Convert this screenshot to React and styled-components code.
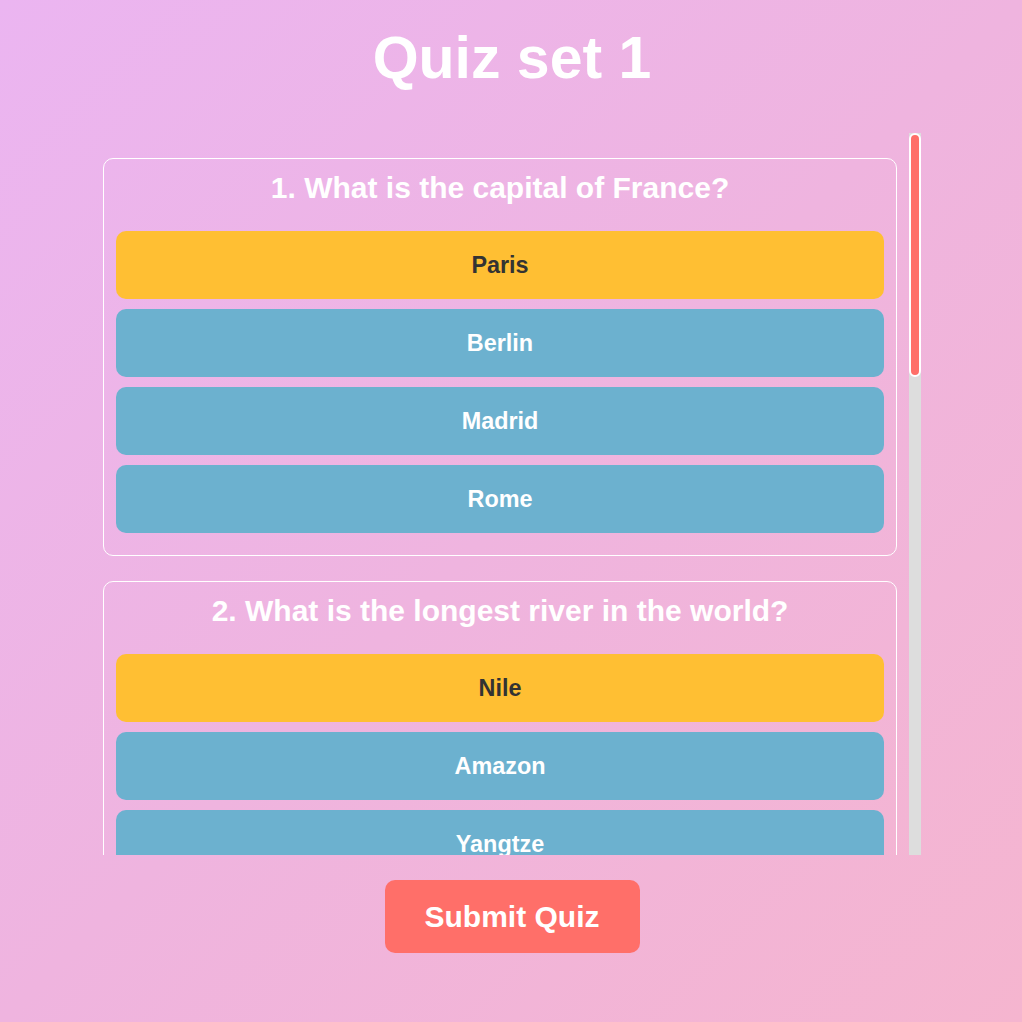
import React, { useState, useRef, useEffect, useCallback } from "react";
import styled, { createGlobalStyle } from "styled-components";

const GlobalStyle = createGlobalStyle`
  html, body {
    margin: 0;
    padding: 0;
    height: 100%;
  }
  body {
    font-family: "Liberation Sans", Arial, Helvetica, sans-serif;
    background: linear-gradient(135deg, #ebb5f1 0%, #efb4df 50%, #f5b5cf 100%);
    min-height: 1022px;
  }
`;

const Page = styled.div`
  display: flex;
  flex-direction: column;
  align-items: center;
  padding-left: 2px;
  min-height: 1022px;
  box-sizing: border-box;
`;

const Title = styled.h1`
  margin: 24px 0 41px;
  font-size: 59px;
  font-weight: 700;
  line-height: 68px;
  color: #ffffff;
  text-align: center;
`;

const ScrollFrame = styled.div`
  display: flex;
  width: 818px;
  height: 722px;
`;

const ScrollArea = styled.div`
  flex: 1;
  height: 100%;
  box-sizing: border-box;
  padding-right: 12px;
  overflow-y: scroll;
  scrollbar-width: none;
  &::-webkit-scrollbar {
    display: none;
  }
`;

const Track = styled.div`
  position: relative;
  width: 12px;
  height: 100%;
  background: #dddddd;
`;

const Thumb = styled.div`
  position: absolute;
  left: 0;
  width: 12px;
  box-sizing: border-box;
  background: #ff6f69;
  border: 2px solid #ffffff;
  border-radius: 6px;
`;

const Card = styled.section`
  margin: 25px 0;
  padding: 12px;
  border: 1px solid #ffffff;
  border-radius: 10px;
`;

const Question = styled.h2`
  margin: 0 0 26px;
  font-size: 30px;
  font-weight: 700;
  line-height: 34px;
  color: #ffffff;
  text-align: center;
`;

const Options = styled.div`
  display: flex;
  flex-direction: column;
  gap: 10px;
  padding-bottom: 10px;
`;

const Option = styled.button`
  display: block;
  width: 100%;
  border: none;
  border-radius: 10px;
  padding: 20px;
  font-family: inherit;
  font-size: 23.4px;
  font-weight: 700;
  line-height: 28px;
  cursor: pointer;
  background: ${(p) => (p.$selected ? "#ffbf33" : "#6cb1cf")};
  color: ${(p) => (p.$selected ? "#333333" : "#ffffff")};
`;

const Submit = styled.button`
  margin-top: 25px;
  border: none;
  border-radius: 10px;
  padding: 20px 40px;
  background: #ff6f69;
  color: #ffffff;
  font-family: inherit;
  font-size: 30px;
  font-weight: 700;
  line-height: 33px;
  cursor: pointer;
`;

const questions = [
  {
    q: "What is the capital of France?",
    options: ["Paris", "Berlin", "Madrid", "Rome"],
  },
  {
    q: "What is the longest river in the world?",
    options: ["Nile", "Amazon", "Yangtze", "Mississippi"],
  },
  {
    q: "What is the largest planet in our solar system?",
    options: ["Jupiter", "Saturn", "Earth", "Mars"],
  },
  {
    q: "Which ocean is the largest?",
    options: ["Pacific", "Atlantic", "Indian", "Arctic"],
  },
  {
    q: "What is the tallest mountain in the world?",
    options: ["Mount Everest", "K2", "Kangchenjunga", "Lhotse"],
  },
];

export default function App() {
  const [answers, setAnswers] = useState(questions.map(() => 0));
  const [thumb, setThumb] = useState({ top: 0, height: 244 });
  const areaRef = useRef(null);

  const choose = (qi, oi) =>
    setAnswers((a) => a.map((v, i) => (i === qi ? oi : v)));

  const measure = useCallback(() => {
    const el = areaRef.current;
    if (!el) return;
    const ratio = el.clientHeight / el.scrollHeight;
    const height = Math.max(20, el.clientHeight * ratio);
    const maxTop = el.clientHeight - height;
    const scrollable = el.scrollHeight - el.clientHeight;
    const top = scrollable > 0 ? (el.scrollTop / scrollable) * maxTop : 0;
    setThumb({ top, height });
  }, []);

  useEffect(() => {
    measure();
  }, [measure]);

  return (
    <>
      <GlobalStyle />
      <Page>
        <Title>Quiz set 1</Title>
        <ScrollFrame>
          <ScrollArea ref={areaRef} onScroll={measure}>
            {questions.map((item, qi) => (
              <Card key={qi}>
                <Question>
                  {qi + 1}. {item.q}
                </Question>
                <Options>
                  {item.options.map((opt, oi) => (
                    <Option
                      key={opt}
                      $selected={answers[qi] === oi}
                      onClick={() => choose(qi, oi)}
                    >
                      {opt}
                    </Option>
                  ))}
                </Options>
              </Card>
            ))}
          </ScrollArea>
          <Track>
            <Thumb style={{ top: thumb.top, height: thumb.height }} />
          </Track>
        </ScrollFrame>
        <Submit>Submit Quiz</Submit>
      </Page>
    </>
  );
}
